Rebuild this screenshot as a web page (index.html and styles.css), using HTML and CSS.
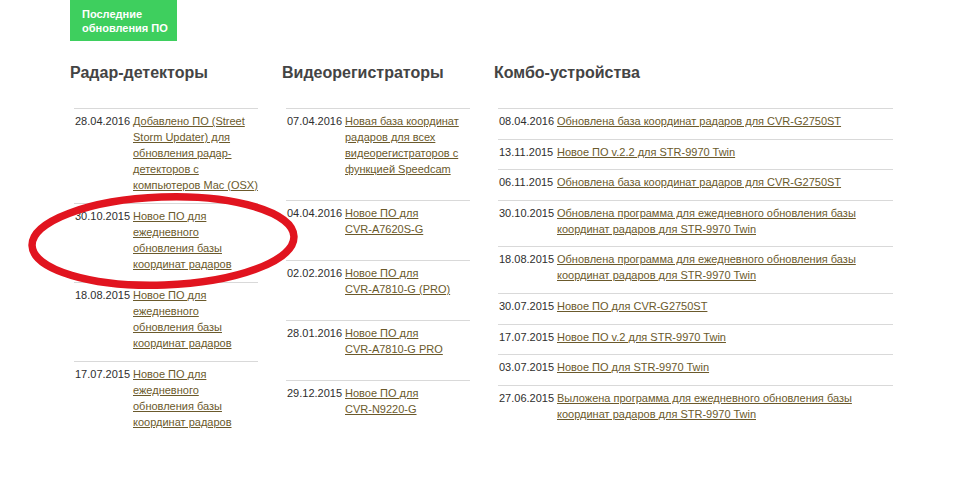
FILE: index.html
```html
<!DOCTYPE html>
<html lang="ru">
<head>
    <meta charset="UTF-8">
    <meta name="viewport" content="width=device-width, initial-scale=1.0">
    <title>Последние обновления ПО</title>
    <link rel="stylesheet" href="styles.css">
</head>
<body>
    <div class="page">
        <a class="updates-tab" href="#">Последние обновления ПО</a>

        <div class="columns">
            <div class="column">
                <h2>Радар-детекторы</h2>
                <ul class="news">
                    <li><span class="date">28.04.2016</span><a href="#">Добавлено ПО (Street Storm Updater) для обновления радар-детекторов с компьютеров Mac (OSX)</a></li>
                    <li><span class="date">30.10.2015</span><a href="#">Новое ПО для ежедневного обновления базы координат радаров</a></li>
                    <li><span class="date">18.08.2015</span><a href="#">Новое ПО для ежедневного обновления базы координат радаров</a></li>
                    <li><span class="date">17.07.2015</span><a href="#">Новое ПО для ежедневного обновления базы координат радаров</a></li>
                </ul>
            </div>

            <div class="column">
                <h2>Видеорегистраторы</h2>
                <ul class="news news-loose">
                    <li><span class="date">07.04.2016</span><a href="#">Новая база координат радаров для всех видеорегистраторов с функцией Speedcam</a></li>
                    <li><span class="date">04.04.2016</span><a href="#">Новое ПО для <span class="model">CVR-A7620S-G</span></a></li>
                    <li><span class="date">02.02.2016</span><a href="#">Новое ПО для <span class="model">CVR-A7810-G (PRO)</span></a></li>
                    <li><span class="date">28.01.2016</span><a href="#">Новое ПО для <span class="model">CVR-A7810-G PRO</span></a></li>
                    <li><span class="date">29.12.2015</span><a href="#">Новое ПО для <span class="model">CVR-N9220-G</span></a></li>
                </ul>
            </div>

            <div class="column column-wide">
                <h2>Комбо-устройства</h2>
                <ul class="news">
                    <li><span class="date">08.04.2016</span><a href="#">Обновлена база координат радаров для CVR-G2750ST</a></li>
                    <li><span class="date">13.11.2015</span><a href="#">Новое ПО v.2.2 для STR-9970 Twin</a></li>
                    <li><span class="date">06.11.2015</span><a href="#">Обновлена база координат радаров для CVR-G2750ST</a></li>
                    <li><span class="date">30.10.2015</span><a href="#">Обновлена программа для ежедневного обновления базы координат радаров для STR-9970 Twin</a></li>
                    <li><span class="date">18.08.2015</span><a href="#">Обновлена программа для ежедневного обновления базы координат радаров для STR-9970 Twin</a></li>
                    <li><span class="date">30.07.2015</span><a href="#">Новое ПО для CVR-G2750ST</a></li>
                    <li><span class="date">17.07.2015</span><a href="#">Новое ПО v.2 для STR-9970 Twin</a></li>
                    <li><span class="date">03.07.2015</span><a href="#">Новое ПО для STR-9970 Twin</a></li>
                    <li><span class="date">27.06.2015</span><a href="#">Выложена программа для ежедневного обновления базы координат радаров для STR-9970 Twin</a></li>
                </ul>
            </div>
        </div>

        <!-- red marker circled around one entry -->
        <svg class="marker" width="290" height="110" viewBox="0 0 290 110">
            <ellipse cx="139" cy="53" rx="131" ry="44" fill="none" stroke="#e1141f" stroke-width="7.5" transform="rotate(-2 139 53)"/>
        </svg>
    </div>
</body>
</html>
```

FILE: styles.css
```css
html, body {
    margin: 0;
    padding: 0;
    background: #fff;
}
body {
    font-family: "Liberation Sans", Arial, sans-serif;
    font-size: 11px;
    color: #333;
}
.page {
    position: relative;
    padding-left: 70px;
}
.updates-tab {
    display: block;
    box-sizing: border-box;
    width: 107px;
    height: 41px;
    padding: 7px 0 0 12px;
    background-color: #3ecf5e;
    color: #fff;
    font-weight: bold;
    font-size: 11px;
    line-height: 14px;
    text-decoration: none;
}
.columns {
    display: flex;
}
.column {
    width: 212px;
}
.column-wide {
    width: 400px;
}
.column h2 {
    margin: 22px 0 25px;
    font-size: 16px;
    line-height: 20px;
    color: #444;
}
.news {
    list-style: none;
    margin: 0 0 0 4px;
    padding: 0;
    width: 184px;
}
.column-wide .news {
    width: 395px;
}
.news li {
    display: flex;
    border-top: 1px solid #d9d9d9;
    padding: 4px 0 10px 1px;
    line-height: 16px;
}
.column-wide .news li {
    padding-bottom: 9.6px;
}
.news-loose li {
    padding-bottom: 23px;
}
.date {
    flex: 0 0 58px;
    color: #2e2e2e;
}
.news a {
    color: #6b5a2c;
    text-decoration: underline;
}
.model {
    white-space: nowrap;
}
.marker {
    position: absolute;
    left: 24px;
    top: 188px;
    pointer-events: none;
}
```
